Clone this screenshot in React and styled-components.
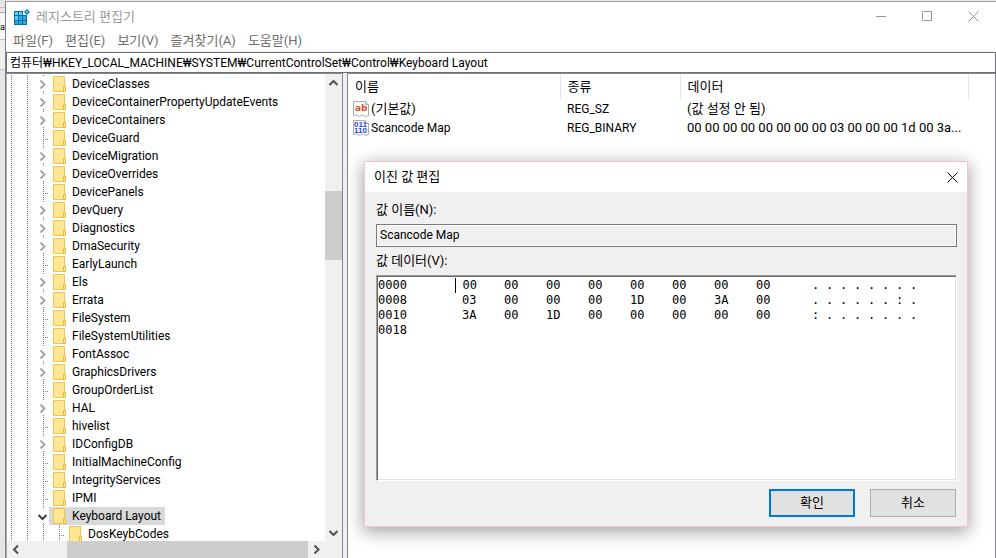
import { useState } from "react";
import styled, { createGlobalStyle, css } from "styled-components";

const GlobalStyle = createGlobalStyle`
*{
    box-sizing:border-box;
}
body{
    margin:0;
    background-color:#e8e8e8;
    color:black;
    font-family:Roboto, "Noto Sans CJK KR", sans-serif;
    font-size:12px;
    line-height:18px;
}
button, input{
    font:inherit;
    color:inherit;
    margin:0;
    padding:0;
    border:none;
    border-radius:0;
    background:none;
    outline:none;
}
`
const Desktop = styled.div`
display:flex;
height:100vh;
overflow:hidden;
`
const Backdrop = styled.div`
flex:0 0 5px;
display:flex;
flex-direction:column;
padding-top:7px;
background-color:#e6e6e6;
font-size:9px;
.strip{
    height:6px;
    border-top:1px solid #c4c4c4;
    border-bottom:1px solid #b0b0b0;
}
.text{
    height:27px;
    line-height:29px;
    background-color:#f8f8f8;
    border-bottom:1px solid #c4c4c4;
}
.panel{
    height:30px;
    background-color:#f0f0f0;
    border-bottom:1px solid #c4c4c4;
}
`
const Window = styled.main`
flex:1;
min-width:0;
display:flex;
flex-direction:column;
margin-top:1px;
border-top:1px solid #a0a0a0;
border-left:1px solid #7c7f84;
background-color:white;
`
const TitleBar = styled.header`
display:flex;
align-items:center;
height:29px;
padding-left:8px;
color:#999999;
font-size:13px;
h1{
    flex:1;
    margin:0 0 0 6px;
    font-size:13px;
    font-weight:400;
}
`
const WindowButton = styled.button`
display:flex;
align-items:center;
justify-content:center;
width:${(props) => props.$width || 46}px;
height:29px;
`
const MenuBar = styled.nav`
display:flex;
gap:12px;
height:20px;
padding-left:7px;
color:#6d6d6d;
font-size:13px;
line-height:20px;
`
const AddressBar = styled.div`
display:flex;
border-top:1px solid #f0f0f0;
input{
    flex:1;
    height:21px;
    padding:0 3px 2px;
    border:1px solid #6e7076;
}
`
const Panes = styled.div`
flex:1;
min-height:0;
display:grid;
grid-template-columns:337px 4px 1fr;
background-color:#f0f0f0;
`
const TreePane = styled.section`
display:grid;
grid-template-columns:1fr 17px;
grid-template-rows:minmax(0, 1fr) 17px;
min-height:0;
border:1px solid #828790;
border-left-color:#a8abb0;
border-bottom:none;
background-color:white;
.corner{
    background-color:#f0f0f0;
}
`
const Tree = styled.ul`
margin:0;
padding:1px 0 0;
overflow:hidden;
list-style:none;
`
const TreeRow = styled.li`
display:flex;
height:18px;
`
const dots = "#757575 0 1px, transparent 1px 2px"
const Guide = styled.span`
flex:0 0 ${(props) => (props.$branch ? 10 : 16)}px;
background-image:repeating-linear-gradient(to bottom, ${dots})${(props) => props.$leaf && css`, repeating-linear-gradient(to right, ${dots})`};
background-position:4px 0, 4px 10px;
background-size:1px 100%, 6px 1px;
background-repeat:no-repeat;
`
const Toggle = styled.button`
display:flex;
align-items:center;
justify-content:center;
width:7px;
height:14px;
margin-top:2px;
background-color:white;
color:${(props) => (props.$open ? "#404040" : "#a6a6a6")};
svg{
    flex:none;
}
`
const KeyName = styled.button`
display:flex;
align-items:center;
gap:5px;
padding:0 4px;
white-space:nowrap;
background-color:${(props) => (props.$selected ? "#d9d9d9" : "transparent")};
`
const ScrollBar = styled.div`
display:grid;
background-color:#f0f0f0;
${(props) => props.$horizontal
    ? css`grid-template-columns:17px 43fr 240fr 17px;`
    : css`grid-template-rows:17px 100fr 69fr 264fr 17px;`}
button{
    display:flex;
    align-items:center;
    justify-content:center;
    color:#505050;
}
.thumb{
    background-color:#cdcdcd;
}
`
const ValuePane = styled.section`
position:relative;
min-width:0;
border:1px solid #828790;
border-bottom:none;
background-color:white;
`
const ValueTable = styled.table`
width:100%;
border-collapse:collapse;
table-layout:fixed;
th, td{
    padding:0 0 0 7px;
    font-weight:400;
    text-align:left;
    white-space:nowrap;
}
th{
    height:25px;
    border-right:1px solid #e5e5e5;
    font-size:13px;
}
th:last-child{
    border-right:none;
}
td{
    height:19px;
}
td:first-child{
    padding-left:5px;
}
.name{
    display:flex;
    align-items:center;
    gap:2px;
}
.name-col{
    width:212px;
}
.type-col{
    width:120px;
}
.data-col{
    width:288px;
}
`
const Large = styled.span`
font-size:13px;
`
const Dialog = styled.div`
position:absolute;
top:87px;
left:16px;
right:27px;
border:1px solid #f5c3d9;
background-color:#f0f0f0;
box-shadow:0 4px 16px 1px rgba(0, 0, 0, 0.36);
font-size:13px;
`
const DialogTitle = styled.div`
display:flex;
align-items:center;
justify-content:space-between;
height:30px;
padding-left:9px;
background-color:white;
h2{
    margin:0;
    font-size:13px;
    font-weight:400;
}
`
const DialogBody = styled.form`
display:flex;
flex-direction:column;
padding:8px 10px 9px 11px;
`
const FieldLabel = styled.label`
line-height:20px;
margin-bottom:4px;
`
const NameInput = styled.input`
width:100%;
height:23px;
margin-bottom:4px;
padding:0 3px 2px;
border:1px solid #7a7a7a;
background-color:#f0f0f0;
box-shadow:inset 0 0 0 1px white;
font-size:12px;
`
const HexBox = styled.div`
height:206px;
padding:2px 0 0 1px;
border:1px solid;
border-color:#a0a0a0 white white #a0a0a0;
box-shadow:inset 1px 1px 0 #696969, inset -1px -1px 0 #e3e3e3;
background-color:white;
overflow:hidden;
table{
    border-collapse:collapse;
    table-layout:fixed;
    width:546px;
    font-family:"DejaVu Sans Mono", monospace;
    font-size:12px;
    line-height:15px;
}
th, td{
    height:15px;
    padding:0;
    font-weight:400;
    text-align:left;
}
.offset{
    width:77px;
}
.byte{
    width:42px;
    padding-left:7px;
}
.caret{
    border-left:1px solid black;
}
.space{
    width:21px;
}
.char{
    width:14px;
}
`
const Buttons = styled.div`
display:flex;
justify-content:flex-end;
gap:15px;
padding:8px 1px 0 0;
`
const PushButton = styled.button`
width:86px;
height:28px;
border:${(props) => (props.$primary ? "2px solid #0078d7" : "1px solid #adadad")};
background-color:#e1e1e1;
`

const keys = [
    ["DeviceClasses", true],
    ["DeviceContainerPropertyUpdateEvents", true],
    ["DeviceContainers", true],
    ["DeviceGuard", false],
    ["DeviceMigration", true],
    ["DeviceOverrides", true],
    ["DevicePanels", false],
    ["DevQuery", true],
    ["Diagnostics", true],
    ["DmaSecurity", true],
    ["EarlyLaunch", false],
    ["Els", true],
    ["Errata", true],
    ["FileSystem", false],
    ["FileSystemUtilities", false],
    ["FontAssoc", true],
    ["GraphicsDrivers", true],
    ["GroupOrderList", false],
    ["HAL", true],
    ["hivelist", false],
    ["IDConfigDB", true],
    ["InitialMachineConfig", false],
    ["IntegrityServices", false],
    ["IPMI", false],
    ["Keyboard Layout", true],
    ["DosKeybCodes", false, 1],
]

const hexRows = [
    ["0000", "00 00 00 00 00 00 00 00", "........"],
    ["0008", "03 00 00 00 1D 00 3A 00", "......:."],
    ["0010", "3A 00 1D 00 00 00 00 00", ":......."],
    ["0018", "", ""],
]

const menus = ["파일(F)", "편집(E)", "보기(V)", "즐겨찾기(A)", "도움말(H)"]

const RegeditIcon = () => <svg width="16" height="16" viewBox="0 0 16 16" aria-hidden="true">
    <path d="M0 2h9v4h4v10H0z" fill="#0a6fa5" />
    <path d="M1 3h3v3H1zM5 3h3v3H5zM1 7h3v4H1z" fill="#5fd0fa" />
    <path d="M5 7h3v4H5zM9 7h3v4H9zM1 12h3v3H1zM5 12h3v3H5zM9 12h3v3H9z" fill="#27ade3" />
    <path d="M13 0l3 3-3 3-3-3z" fill="#0a6fa5" />
    <path d="M13 1.500L14.500 3 13 4.500 11.500 3z" fill="#5fd0fa" />
</svg>

const FolderIcon = () => <svg width="14" height="16" viewBox="0 0 14 16" aria-hidden="true">
    <path d="M.5.5h11v15H.5z" fill="#ffe694" stroke="#efc64a" />
    <path d="M10.500 10.500h2v5h-2z" fill="#ffe694" stroke="#e6b93a" />
</svg>

const Chevron = ({ dir }) => {
    const paths = {
        right: "M3.500 1.500l4 4-4 4",
        left: "M8 1.500l-4 4 4 4",
        up: "M1.500 8l4-4 4 4",
        down: "M1.500 4l4 4 4-4",
    }
    return <svg width="11" height="11" viewBox="0 0 11 11" aria-hidden="true">
        <path d={paths[dir]} fill="none" stroke="currentColor" strokeWidth="2" />
    </svg>
}

const Cross = () => <svg width="11" height="11" viewBox="0 0 11 11" aria-hidden="true">
    <path d="M.5.5l10 10M10.500.5l-10 10" stroke="currentColor" />
</svg>

const ValueIcon = ({ binary }) => <svg width="16" height="16" viewBox="0 0 16 16" aria-hidden="true">
    <path d="M.5.5h12l3 3v11l-3 1-3-1.500-3 1.500-3-1.500-3 .5z" fill="white" stroke="#a9adb5" />
    <path d="M12.500.5v3h3" fill="#e4e6ea" stroke="#a9adb5" />
    {binary ? <g fill="#1f45e0" fontFamily="Liberation Sans" fontWeight="700" fontSize="8">
        <text x="1" y="7">011</text>
        <text x="1" y="13">110</text>
    </g> : <text x="2" y="10" fill="#d84a2b" fontFamily="DejaVu Sans" fontWeight="700" fontSize="9">ab</text>}
</svg>

const TreeItem = ({ name, hasChildren, level = 0, selected, onSelect }) => {
    const open = name === "Keyboard Layout"
    return <TreeRow>
        <Guide />
        <Guide />
        {level > 0 && <Guide />}
        <Guide $branch $leaf={!hasChildren}>
            {hasChildren && <Toggle type="button" $open={open} aria-label={name} aria-expanded={open}>
                <Chevron dir={open ? "down" : "right"} />
            </Toggle>}
        </Guide>
        <KeyName type="button" $selected={selected} onClick={() => onSelect(name)}>
            <FolderIcon />
            {name}
        </KeyName>
    </TreeRow>
}

const HexEditor = () => <HexBox>
    <table aria-labelledby="value-data">
        <tbody>
            {hexRows.map(([offset, bytes, chars], row) => <tr key={offset}>
                <th className="offset" scope="row">{offset}</th>
                {(bytes ? bytes.split(" ") : Array(8).fill("")).map((byte, i) => (
                    <td key={i} className={row === 0 && i === 0 ? "byte caret" : "byte"}>{byte}</td>
                ))}
                <td className="space"></td>
                {(chars ? chars.split("") : Array(8).fill("")).map((char, i) => (
                    <td key={i} className="char">{char}</td>
                ))}
            </tr>)}
        </tbody>
    </table>
</HexBox>

const EditDialog = () => <Dialog role="dialog" aria-labelledby="dialog-title">
    <DialogTitle>
        <h2 id="dialog-title">이진 값 편집</h2>
        <WindowButton type="button" $width={30} aria-label="닫기"><Cross /></WindowButton>
    </DialogTitle>
    <DialogBody onSubmit={(e) => e.preventDefault()}>
        <FieldLabel htmlFor="value-name">값 이름(N):</FieldLabel>
        <NameInput id="value-name" readOnly value="Scancode Map" />
        <FieldLabel as="span" id="value-data">값 데이터(V):</FieldLabel>
        <HexEditor />
        <Buttons>
            <PushButton type="submit" $primary>확인</PushButton>
            <PushButton type="button">취소</PushButton>
        </Buttons>
    </DialogBody>
</Dialog>

export default function App() {
    const [selected, setSelected] = useState("Keyboard Layout")
    const [address, setAddress] = useState("컴퓨터₩HKEY_LOCAL_MACHINE₩SYSTEM₩CurrentControlSet₩Control₩Keyboard Layout")
    return <>
    <GlobalStyle />
    <Desktop>
        <Backdrop>
            <div className="strip"></div>
            <div className="text">a</div>
            <div className="panel"></div>
        </Backdrop>
        <Window>
            <TitleBar>
                <RegeditIcon />
                <h1>레지스트리 편집기</h1>
                <WindowButton type="button" aria-label="최소화">
                    <svg width="11" height="11" aria-hidden="true"><path d="M0 5.500h10" stroke="currentColor" /></svg>
                </WindowButton>
                <WindowButton type="button" aria-label="최대화">
                    <svg width="11" height="11" aria-hidden="true"><path d="M.5.5h9v9h-9z" fill="none" stroke="currentColor" /></svg>
                </WindowButton>
                <WindowButton type="button" aria-label="닫기"><Cross /></WindowButton>
            </TitleBar>
            <MenuBar>
                {menus.map((menu) => <button key={menu} type="button">{menu}</button>)}
            </MenuBar>
            <AddressBar>
                <input aria-label="주소" value={address} onChange={(e) => setAddress(e.target.value)} />
            </AddressBar>
            <Panes>
                <TreePane>
                    <Tree>
                        {keys.map(([name, hasChildren, level]) => <TreeItem
                            key={name}
                            name={name}
                            hasChildren={hasChildren}
                            level={level}
                            selected={name === selected}
                            onSelect={setSelected}
                        />)}
                    </Tree>
                    <ScrollBar>
                        <button type="button" aria-label="위로"><Chevron dir="up" /></button>
                        <span></span>
                        <span className="thumb"></span>
                        <span></span>
                        <button type="button" aria-label="아래로"><Chevron dir="down" /></button>
                    </ScrollBar>
                    <ScrollBar $horizontal>
                        <button type="button" aria-label="왼쪽"><Chevron dir="left" /></button>
                        <span></span>
                        <span className="thumb"></span>
                        <button type="button" aria-label="오른쪽"><Chevron dir="right" /></button>
                    </ScrollBar>
                    <div className="corner"></div>
                </TreePane>
                <span></span>
                <ValuePane>
                    <ValueTable>
                        <colgroup>
                            <col className="name-col" />
                            <col className="type-col" />
                            <col className="data-col" />
                            <col />
                        </colgroup>
                        <thead>
                            <tr>
                                <th>이름</th>
                                <th>종류</th>
                                <th>데이터</th>
                                <th></th>
                            </tr>
                        </thead>
                        <tbody>
                            <tr>
                                <td><div className="name"><ValueIcon /><Large>(기본값)</Large></div></td>
                                <td>REG_SZ</td>
                                <td><Large>(값 설정 안 됨)</Large></td>
                                <td></td>
                            </tr>
                            <tr>
                                <td><div className="name"><ValueIcon binary />Scancode Map</div></td>
                                <td>REG_BINARY</td>
                                <td><Large>00 00 00 00 00 00 00 00 03 00 00 00 1d 00 3a...</Large></td>
                                <td></td>
                            </tr>
                        </tbody>
                    </ValueTable>
                    <EditDialog />
                </ValuePane>
            </Panes>
        </Window>
    </Desktop>
    </>
}
